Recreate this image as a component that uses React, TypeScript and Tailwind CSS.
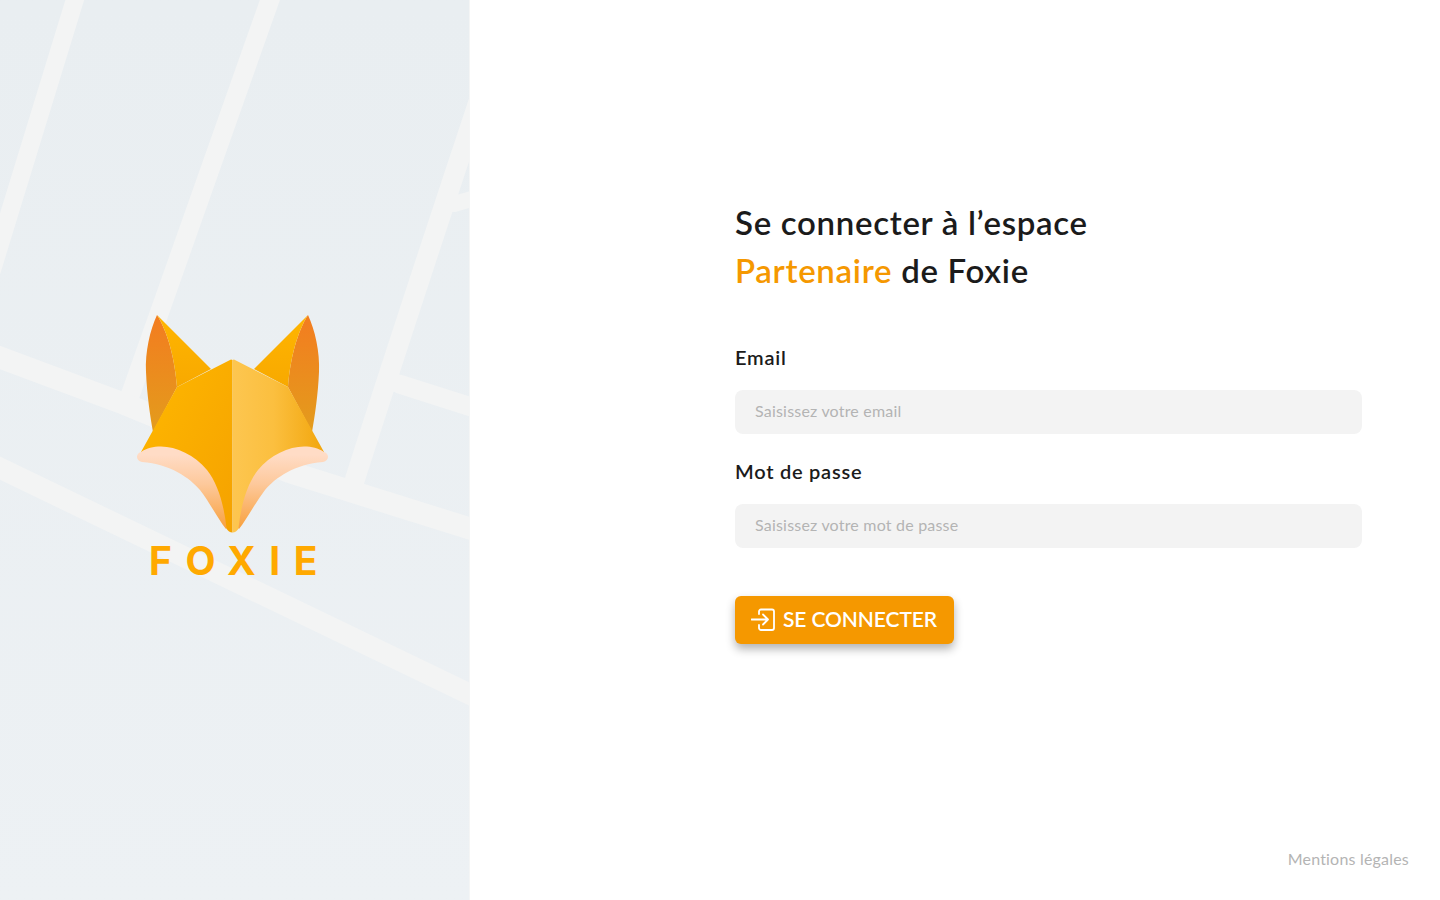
function MapRoads() {
  return (
    <svg className="absolute inset-0 h-full w-full blur-[0.7px]" viewBox="0 0 470 900" preserveAspectRatio="none" fill="none" stroke="#f3f4f4" strokeLinejoin="round" strokeLinecap="round">
      <path d="M78 -10 L-8 270" strokeWidth="18" />
      <path d="M274 -10 C235 100 190 230 127 405" strokeWidth="19" />
      <path d="M490 70 C440 220 400 340 352 491" strokeWidth="20" />
      <path d="M455 204 L480 197" strokeWidth="16" />
      <path d="M-15 352 L125 404 L290 472 L485 533" strokeWidth="22" />
      <path d="M400 384 L485 411" strokeWidth="19" />
      <path d="M-15 461 L485 701" strokeWidth="21" />
    </svg>
  );
}

function FoxLogo() {
  const ear = (
    <>
      <path d="M157 315 C150 330 145 352 146 372 C147 395 150 415 153 432 L177 387 C175 360 168 332 157 315 Z" fill="url(#earDark)" />
      <path d="M157 315 L211 369 L177 387 C175 360 168 332 157 315 Z" fill="url(#earLight)" />
    </>
  );
  const cheek = (
    <path
      d="M141 452 C147 448 153 446.5 161 446.5 C176 446.5 195 455 207 470 C218 484 224 505 226.5 528 L226 529 C218 519 210 503 200 490 C190 478 170 464 142 462 C136 461 135 454 141 452 Z"
      fill="url(#cheek)"
    />
  );

  return (
    <svg width="196" height="220" viewBox="136 314 196 220">
      <defs>
        <linearGradient id="earDark" x1="0" y1="0" x2="0" y2="1">
          <stop offset="0" stopColor="#f37c20" />
          <stop offset="1" stopColor="#e39c1c" />
        </linearGradient>
        <linearGradient id="earLight" x1="0" y1="0" x2="0" y2="1">
          <stop offset="0" stopColor="#ffb500" />
          <stop offset="1" stopColor="#f8a900" />
        </linearGradient>
        <linearGradient id="faceLeft" x1="0" y1="0" x2="1" y2="1">
          <stop offset="0" stopColor="#ffb800" />
          <stop offset="1" stopColor="#f5a200" />
        </linearGradient>
        <linearGradient id="faceRight" x1="0" y1="0" x2="1" y2="0">
          <stop offset="0" stopColor="#fdc650" />
          <stop offset="0.45" stopColor="#fbbf3f" />
          <stop offset="1" stopColor="#f2a60d" />
        </linearGradient>
        <linearGradient id="cheek" x1="0" y1="0" x2="0" y2="1">
          <stop offset="0.1" stopColor="#ffdcc6" />
          <stop offset="0.45" stopColor="#fdc99c" />
          <stop offset="1" stopColor="#f8a03c" />
        </linearGradient>
      </defs>
      {ear}
      <g transform="matrix(-1 0 0 1 465 0)">{ear}</g>
      <path d="M232.5 360 L231 359.6 L177 387 L141 452 L190 465 L226 528 C228 531 230 532.5 232.5 532.5 Z" fill="url(#faceLeft)" />
      <path d="M232.5 360 L234 359.6 L288 387 L324 452 L275 465 L239 528 C237 531 235 532.5 232.5 532.5 Z" fill="url(#faceRight)" />
      {cheek}
      <g transform="matrix(-1 0 0 1 465 0)">{cheek}</g>
    </svg>
  );
}

function Field({ label, placeholder, type }: { label: string; placeholder: string; type: string }) {
  return (
    <div className="flex flex-col">
      <label className="text-[20px] leading-[26px] font-semibold tracking-[0.75px] text-[#1b1b1b]">{label}</label>
      <input
        type={type}
        placeholder={placeholder}
        className="mt-[20px] h-11 w-full rounded-lg bg-[#f3f3f3] px-5 pb-[4px] text-base tracking-[0.2px] outline-none placeholder:text-[#b4b4b4]"
      />
    </div>
  );
}

export default function App() {
  return (
    <div className="flex h-screen w-full overflow-hidden bg-white font-['Lato',sans-serif]">
      <aside className="relative h-full w-[470px] shrink-0 border-r border-[#f4f5f5] bg-gradient-to-b from-[#e9eef1] to-[#edf1f4]">
        <MapRoads />
        <div className="relative flex flex-col items-start pl-[136px] pt-[314px]">
          <FoxLogo />
          <div className="mt-[7px] pl-[13px] font-['Inter',sans-serif] text-[39px] leading-[40px] font-bold tracking-[13.5px] text-[#ffa900]">
            FOXIE
          </div>
        </div>
      </aside>

      <main className="flex h-full flex-1 flex-col">
        <div className="flex-1 pl-[265px] pr-[78px] pt-[198px]">
          <h1 className="text-[33px] leading-[48px] font-semibold tracking-[0.7px] text-[#1b1b1b]">
            Se connecter à l’espace
            <br />
            <span className="text-[#f59800]">Partenaire</span> de Foxie
          </h1>

          <form className="mt-[50px] flex flex-col gap-[24px]">
            <Field label="Email" placeholder="Saisissez votre email" type="email" />
            <Field label="Mot de passe" placeholder="Saisissez votre mot de passe" type="password" />
            <button
              type="button"
              className="mt-[24px] flex h-12 w-[219px] items-center gap-2 rounded-md bg-[#f59800] pb-[2px] pl-4 text-[21px] font-semibold tracking-[-0.1px] text-white shadow-[0_5px_10px_rgba(0,0,0,0.3)]"
            >
              <svg className="mt-[2px]" width="24" height="24" viewBox="0 0 24 24" fill="none" stroke="currentColor" strokeWidth="1.8" strokeLinecap="round" strokeLinejoin="round">
                <path d="M8 6 V3.5 A2 2 0 0 1 10 1.5 H21 A2 2 0 0 1 23 3.5 V20 A2 2 0 0 1 21 22 H10 A2 2 0 0 1 8 20 V17" />
                <path d="M0.5 11.5 H17 M12 6.5 L17 11.5 L12 16.5" />
              </svg>
              SE CONNECTER
            </button>
          </form>
        </div>
        <footer className="pb-[29px] pr-[31px] text-right text-base leading-[24px] tracking-[0.2px] text-[#b4b4b4]">Mentions légales</footer>
      </main>
    </div>
  );
}
